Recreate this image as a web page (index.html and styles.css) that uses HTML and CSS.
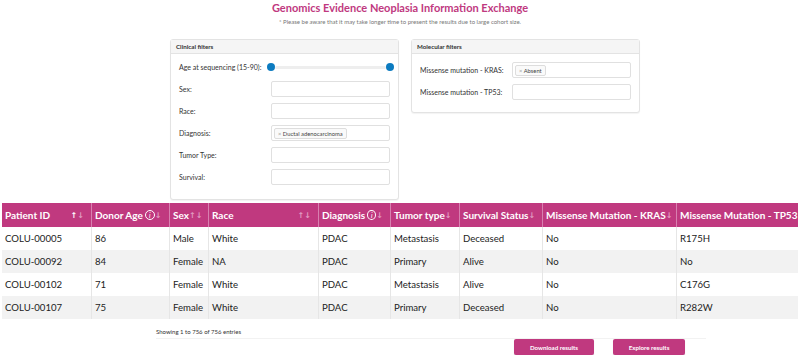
FILE: index.html
```html
<!DOCTYPE html>
<html lang="en">
<head>
    <meta charset="UTF-8">
    <title>Genomics Evidence Neoplasia Information Exchange</title>
    <link rel="stylesheet" href="styles.css">
</head>
<body>
    <h1 class="title">Genomics Evidence Neoplasia Information Exchange</h1>
    <p class="note">* Please be aware that it may take longer time to present the results due to large cohort size.</p>

    <div class="filters">
        <div class="panel">
            <div class="panel-head">Clinical filters</div>
            <div class="panel-body">
                <div class="filter-row">
                    <label>Age at sequencing (15-90):</label>
                    <div class="slider">
                        <span class="thumb"></span>
                        <span class="track"></span>
                        <span class="thumb"></span>
                    </div>
                </div>
                <div class="filter-row">
                    <label>Sex:</label>
                    <div class="select"></div>
                </div>
                <div class="filter-row">
                    <label>Race:</label>
                    <div class="select"></div>
                </div>
                <div class="filter-row">
                    <label>Diagnosis:</label>
                    <div class="select"><span class="tag"><span class="tag-x">×</span> Ductal adenocarcinoma</span></div>
                </div>
                <div class="filter-row">
                    <label>Tumor Type:</label>
                    <div class="select"></div>
                </div>
                <div class="filter-row">
                    <label>Survival:</label>
                    <div class="select"></div>
                </div>
            </div>
        </div>

        <div class="panel">
            <div class="panel-head">Molecular filters</div>
            <div class="panel-body molecular">
                <div class="filter-row">
                    <label>Missense mutation - KRAS:</label>
                    <div class="select"><span class="tag"><span class="tag-x">×</span> Absent</span></div>
                </div>
                <div class="filter-row">
                    <label>Missense mutation - TP53:</label>
                    <div class="select"></div>
                </div>
            </div>
        </div>
    </div>

    <div class="results">
        <div class="row head">
            <div class="cell">Patient ID<span class="sort"><b class="on">↑</b><b>↓</b></span></div>
            <div class="cell">Donor Age<span class="info">i</span><span class="sort tight"><b>↓</b></span></div>
            <div class="cell">Sex<span class="sort tight"><b>↑</b><b>↓</b></span></div>
            <div class="cell">Race<span class="sort"><b>↑</b><b>↓</b></span></div>
            <div class="cell">Diagnosis<span class="info">i</span><span class="sort tight"><b>↓</b></span></div>
            <div class="cell">Tumor type<span class="sort tight"><b>↓</b></span></div>
            <div class="cell">Survival Status<span class="sort tight"><b>↓</b></span></div>
            <div class="cell">Missense Mutation - KRAS<span class="sort tight"><b>↓</b></span></div>
            <div class="cell">Missense Mutation - TP53</div>
        </div>
        <div id="tableBody"></div>
    </div>

    <div class="footer">
        <div class="info-line">Showing 1 to 756 of 756 entries</div>
        <div class="actions">
            <button class="btn download">Download results</button>
            <button class="btn">Explore results</button>
        </div>
    </div>

    <script>
        const patients = [
            ['COLU-00005', '86', 'Male', 'White', 'PDAC', 'Metastasis', 'Deceased', 'No', 'R175H'],
            ['COLU-00092', '84', 'Female', 'NA', 'PDAC', 'Primary', 'Alive', 'No', 'No'],
            ['COLU-00102', '71', 'Female', 'White', 'PDAC', 'Metastasis', 'Alive', 'No', 'C176G'],
            ['COLU-00107', '75', 'Female', 'White', 'PDAC', 'Primary', 'Deceased', 'No', 'R282W']
        ];

        const tableBody = document.getElementById('tableBody');
        patients.forEach(p => {
            const row = document.createElement('div');
            row.className = 'row';
            row.innerHTML = p.map(v => `<div class="cell">${v}</div>`).join('');
            tableBody.appendChild(row);
        });
    </script>
</body>
</html>
```

FILE: styles.css
```css
body {
    margin: 0;
    font-family: Lato, "Open Sans", sans-serif;
    background-color: #ffffff;
    color: #222222;
}
.title {
    margin: 0;
    padding-top: 1px;
    text-align: center;
    font-size: 11px;
    line-height: 14px;
    font-weight: bold;
    color: #c0397f;
}
.note {
    margin: 3px 0 0;
    text-align: center;
    font-size: 6px;
    line-height: 8px;
    color: #777777;
}
.filters {
    display: flex;
    justify-content: center;
    align-items: flex-start;
    gap: 12px;
    margin-top: 13px;
    padding-left: 10px;
}
.panel {
    width: 227px;
    border: 1px solid #e3e3e3;
    border-radius: 3px;
    background-color: #ffffff;
    box-shadow: 0 1px 1px rgba(0, 0, 0, 0.05);
}
.panel-head {
    height: 13px;
    line-height: 13px;
    padding: 0 5px;
    font-size: 6.2px;
    font-weight: bold;
    background-color: #f5f5f5;
    border-bottom: 1px solid #e3e3e3;
    color: #333333;
}
.panel-body {
    padding: 5px 8px 14px 8px;
    display: flex;
    flex-direction: column;
    gap: 6px;
}
.panel-body.molecular {
    padding-top: 8px;
    padding-bottom: 12px;
}
.filter-row {
    display: flex;
    align-items: center;
    height: 16px;
}
.filter-row label {
    width: 92px;
    flex-shrink: 0;
    font-size: 7px;
    color: #333333;
}
.select {
    flex-grow: 1;
    height: 14px;
    border: 1px solid #e0e0e0;
    border-radius: 2px;
    display: flex;
    align-items: center;
    padding: 0 2px;
}
.tag {
    font-size: 5.8px;
    line-height: 9px;
    padding: 0 3px;
    border: 1px solid #dddddd;
    border-radius: 2px;
    background-color: #fafafa;
    color: #444444;
}
.tag-x {
    color: #999999;
}
.slider {
    flex-grow: 1;
    display: flex;
    align-items: center;
    margin-right: -4px;
    margin-left: -4px;
}
.track {
    flex-grow: 1;
    height: 3px;
    background-color: #eeeeee;
    border-radius: 2px;
}
.thumb {
    width: 8px;
    height: 8px;
    border-radius: 50%;
    background-color: #0c7bc0;
}
.results {
    margin: 3px 2px 0;
}
.row {
    display: grid;
    grid-template-columns: 89px 78px 39px 110px 72px 69px 83px 134px 122px;
    height: 23px;
}
.row:nth-child(even) {
    background-color: #f2f2f2;
}
.row .cell {
    display: flex;
    align-items: center;
    padding: 0 3px;
    font-size: 9.6px;
    border-left: 1px solid #e6e6e6;
    white-space: nowrap;
    overflow: hidden;
}
.row .cell:first-child {
    border-left: none;
}
.row.head {
    height: 24px;
    background-color: #c0397f;
}
.row.head .cell {
    color: #ffffff;
    font-weight: bold;
    font-size: 10px;
    border-left: 1px solid #d880b0;
}
.row.head .cell:first-child {
    border-left: none;
}
.sort {
    margin-left: auto;
    margin-right: 4px;
    display: flex;
    font-family: "DejaVu Sans", sans-serif;
    font-size: 8px;
    color: #e19bc1;
}
.sort.tight {
    margin-left: 0;
}
.sort .on {
    color: #ffffff;
}
.info {
    width: 8px;
    height: 8px;
    margin-left: 2px;
    border: 1px solid #ffffff;
    border-radius: 50%;
    font-size: 7px;
    font-style: italic;
    font-weight: normal;
    line-height: 8px;
    text-align: center;
}
.footer {
    padding: 9px 0 0 156px;
}
.info-line {
    font-size: 6px;
    color: #333333;
    padding-bottom: 3px;
    border-bottom: 1px solid #f2f2f2;
    width: 550px;
}
.actions {
    display: flex;
    gap: 19px;
    margin-left: 358px;
}
.btn {
    height: 16px;
    width: 72px;
    padding: 0;
    background-color: #c0397f;
    color: #ffffff;
    border: none;
    border-radius: 2px;
    font-family: Lato, sans-serif;
    font-size: 6.2px;
    font-weight: bold;
    box-shadow: 0 1px 1px rgba(0, 0, 0, 0.15);
}
.btn.download {
    width: 80px;
}
```
